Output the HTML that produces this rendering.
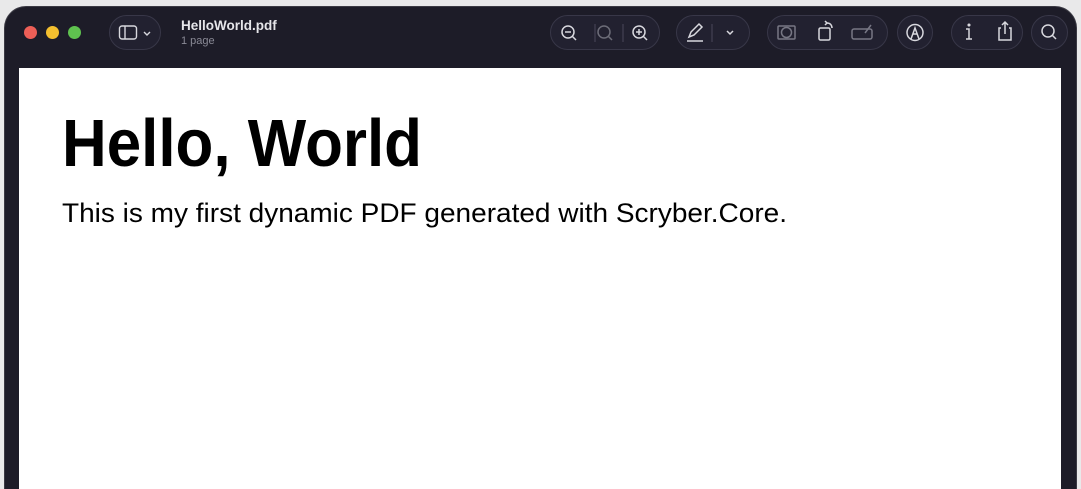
<!DOCTYPE html>
<html><head><style>
html,body{margin:0;padding:0;width:1081px;height:489px;overflow:hidden;background:#e9e9ea;font-family:"Liberation Sans",sans-serif;position:relative}
.win{position:absolute;left:4px;top:6px;width:1073px;height:483px;background:#1d1c28;border-radius:22px 22px 0 0;border:1px solid #3b3a44;border-bottom:none;box-sizing:border-box}
.page{position:absolute;left:19px;top:68px;width:1042px;height:421px;background:#fff}
.pill{position:absolute;top:15px;height:35px;border-radius:18px;background:#222130;border:1px solid #383748;box-sizing:border-box}
.dot{position:absolute;top:26px;width:13px;height:13px;border-radius:50%}
svg.i{position:absolute}
</style></head><body>
<div class="win"></div>
<div class="dot" style="left:24px;background:#ed5f57"></div>
<div class="dot" style="left:46px;background:#f4bf2f"></div>
<div class="dot" style="left:68px;background:#5fc24f"></div>
<div class="pill" style="left:109px;width:52px"></div>
<svg class="i" style="left:118px;top:24px" width="36" height="18" viewBox="0 0 36 18" fill="none" stroke="#d8d8de" stroke-width="1.4"><rect x="1.5" y="2" width="17" height="13" rx="2.5"/><line x1="7" y1="2" x2="7" y2="15"/><path d="M26 8l3 3 3-3"/></svg>
<div style="position:absolute;left:181px;top:18px;color:#e6e6ea;font-weight:bold;font-size:13.5px">HelloWorld.pdf</div>
<div style="position:absolute;left:181px;top:35px;color:#8a8a96;font-size:11px">1 page</div>

<div class="pill" style="left:550px;width:110px"></div>
<svg class="i" style="left:550px;top:15px" width="110" height="35" fill="none" stroke="#d8d8de" stroke-width="1.5">
<circle cx="18" cy="17" r="6"/><line x1="22.5" y1="21.5" x2="26" y2="25"/><line x1="15" y1="17" x2="21" y2="17"/>
<line x1="45" y1="9" x2="45" y2="27" stroke="#3c3b4c"/>
<g stroke="#6c6c78"><circle cx="54" cy="17" r="6"/><line x1="58.5" y1="21.5" x2="62" y2="25"/></g>
<line x1="73" y1="9" x2="73" y2="27" stroke="#3c3b4c"/>
<circle cx="89" cy="17" r="6"/><line x1="93.5" y1="21.5" x2="97" y2="25"/><line x1="86" y1="17" x2="92" y2="17"/><line x1="89" y1="14" x2="89" y2="20"/></svg>
<div class="pill" style="left:676px;width:74px"></div>
<svg class="i" style="left:676px;top:15px" width="74" height="35" fill="none" stroke="#d8d8de" stroke-width="1.5">
<path d="M13 22l2-5 8-8 3 3-8 8z"/><line x1="11" y1="26" x2="27" y2="26"/><line x1="36" y1="9" x2="36" y2="27" stroke="#3c3b4c"/><path d="M51 16l3 3 3-3"/></svg>
<div class="pill" style="left:767px;width:121px"></div>
<svg class="i" style="left:767px;top:15px" width="121" height="35" fill="none" stroke="#d8d8de" stroke-width="1.5">
<g stroke="#777784"><rect x="11" y="11" width="17" height="13" rx="1"/><circle cx="19.5" cy="17.5" r="5"/></g>
<rect x="52" y="13" width="11" height="12" rx="1.5"/><path d="M60 8c3 0 5 2 5 5"/><path d="M58 6l2 2-2 2"/>
<g stroke="#777784"><rect x="85" y="14" width="20" height="10" rx="2"/><path d="M98 18l6-8"/></g></svg>
<div class="pill" style="left:897px;width:36px"></div>
<svg class="i" style="left:897px;top:15px" width="36" height="35" fill="none" stroke="#d8d8de" stroke-width="1.5"><circle cx="18" cy="17.5" r="8"/><path d="M14 24l4-11 4 11M16 19h4"/></svg>
<div class="pill" style="left:951px;width:72px"></div>
<svg class="i" style="left:951px;top:15px" width="72" height="35" fill="none" stroke="#d8d8de" stroke-width="1.5"><circle cx="18" cy="10" r="0.8" fill="#d8d8de"/><path d="M15 14h3v10M15 24h6"/>
<path d="M50 13h-2v12h12v-12h-2"/><path d="M54 19v-12M51 10l3-3 3 3"/></svg>
<div class="pill" style="left:1031px;width:37px"></div>
<svg class="i" style="left:1031px;top:15px" width="37" height="35" fill="none" stroke="#d8d8de" stroke-width="1.5"><circle cx="17" cy="16" r="6"/><line x1="21.5" y1="20.5" x2="25" y2="24"/></svg>

<div class="page"></div>
<svg class="i" style="left:0;top:0" width="1081" height="489">
<text x="62" y="166" font-family="Liberation Sans" font-weight="bold" font-size="67" textLength="360" lengthAdjust="spacingAndGlyphs" fill="#000">Hello, World</text>
<text x="62" y="222" font-family="Liberation Sans" font-size="26.5" textLength="725" lengthAdjust="spacingAndGlyphs" fill="#000">This is my first dynamic PDF generated with Scryber.Core.</text>
</svg>
</body></html>
